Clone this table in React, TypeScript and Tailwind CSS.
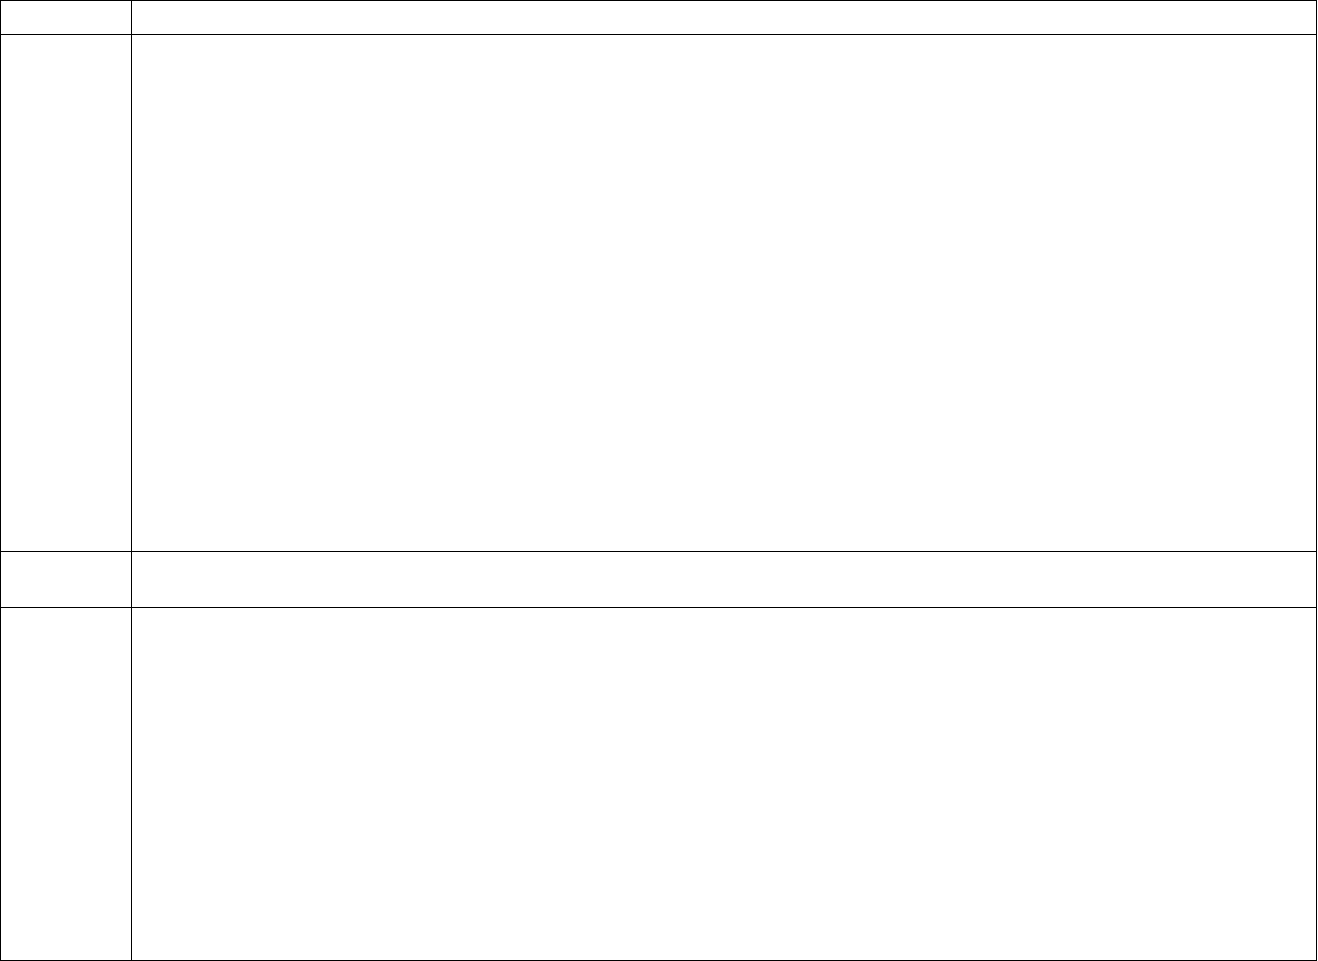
export default function App() {
  const rows = ["h-[34px]", "h-[517px]", "h-[56px]", "h-[354px]"];
  return (
    <div className="h-[961px] w-[1318px] bg-white">
      <div className="flex w-[1317px] flex-col border-l border-r border-black">
        {rows.map((h, i) => (
          <div key={i} className={`flex border-t border-black ${h} ${i === rows.length - 1 ? "border-b" : ""}`}>
            <div className="w-[131px] shrink-0 border-r border-black" />
            <div className="flex-1" />
          </div>
        ))}
      </div>
    </div>
  );
}
